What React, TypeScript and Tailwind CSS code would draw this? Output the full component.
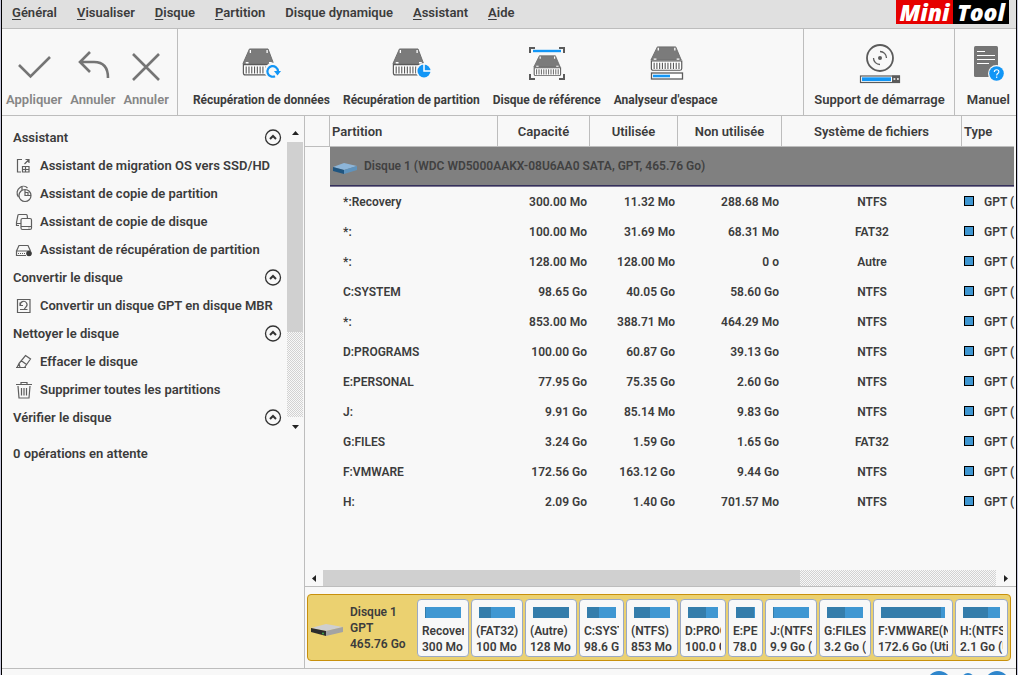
import type { ReactNode } from 'react'

const menus = [
  { key: 'G', rest: 'énéral' },
  { key: 'V', rest: 'isualiser' },
  { key: 'D', rest: 'isque' },
  { key: 'P', rest: 'artition' },
  { key: '', rest: 'Disque dynamique' },
  { key: 'A', rest: 'ssistant' },
  { key: 'A', rest: 'ide' },
]

const partitions = [
  { name: '*:Recovery', size: '300.00 Mo', used: '11.32 Mo', free: '288.68 Mo', fs: 'NTFS', type: 'GPT (Recovery)' },
  { name: '*:', size: '100.00 Mo', used: '31.69 Mo', free: '68.31 Mo', fs: 'FAT32', type: 'GPT (partition EFI)' },
  { name: '*:', size: '128.00 Mo', used: '128.00 Mo', free: '0 o', fs: 'Autre', type: 'GPT (partition)' },
  { name: 'C:SYSTEM', size: '98.65 Go', used: '40.05 Go', free: '58.60 Go', fs: 'NTFS', type: 'GPT (partition)' },
  { name: '*:', size: '853.00 Mo', used: '388.71 Mo', free: '464.29 Mo', fs: 'NTFS', type: 'GPT (Recovery)' },
  { name: 'D:PROGRAMS', size: '100.00 Go', used: '60.87 Go', free: '39.13 Go', fs: 'NTFS', type: 'GPT (partition)' },
  { name: 'E:PERSONAL', size: '77.95 Go', used: '75.35 Go', free: '2.60 Go', fs: 'NTFS', type: 'GPT (partition)' },
  { name: 'J:', size: '9.91 Go', used: '85.14 Mo', free: '9.83 Go', fs: 'NTFS', type: 'GPT (partition)' },
  { name: 'G:FILES', size: '3.24 Go', used: '1.59 Go', free: '1.65 Go', fs: 'FAT32', type: 'GPT (partition)' },
  { name: 'F:VMWARE', size: '172.56 Go', used: '163.12 Go', free: '9.44 Go', fs: 'NTFS', type: 'GPT (partition)' },
  { name: 'H:', size: '2.09 Go', used: '1.40 Go', free: '701.57 Mo', fs: 'NTFS', type: 'GPT (partition)' },
]

// grow = share of the disk map, used = filled part in percent
const blocks = [
  { label: 'Recovery', size: '300 Mo (Utilisé)', used: 3, grow: 52 },
  { label: '(FAT32)', size: '100 Mo (Utilisé)', used: 32, grow: 52 },
  { label: '(Autre)', size: '128 Mo', used: 100, grow: 52 },
  { label: 'C:SYSTEM', size: '98.6 Go (Utilisé)', used: 40, grow: 45 },
  { label: '(NTFS)', size: '853 Mo', used: 45, grow: 52 },
  { label: 'D:PROGRAMS', size: '100.0 Go', used: 61, grow: 46 },
  { label: 'E:PERSONAL', size: '78.0 Go', used: 97, grow: 35 },
  { label: 'J:(NTFS)', size: '9.9 Go (Utilisé)', used: 1, grow: 52 },
  { label: 'G:FILES', size: '3.2 Go (Utilisé)', used: 49, grow: 52 },
  { label: 'F:VMWARE(NTFS)', size: '172.6 Go (Utilisé)', used: 94, grow: 80 },
  { label: 'H:(NTFS)', size: '2.1 Go (Utilisé)', used: 67, grow: 53 },
]

function Drive() {
  return (
    <>
      <path d="M8 1h20l6 15H1z" fill="#7b7b7b" />
      <path d="M8 1h20l6 15H1z" fill="none" stroke="#6b6b6b" />
      <path d="M9 2v3M27 2v3M4 15h3M29 15h3" stroke="#fff" strokeWidth="1.4" />
      <path d="M1.5 17h33v8.5q0 2-2 2h-29q-2 0-2-2z" fill="#fff" stroke="#5b5b5b" strokeWidth="1.3" />
      <path d="M4.5 19v7M7.500 19v7M10.500 19v7M13.500 19v7M16.500 19v7M19.500 19v7M22.500 19v7M25.500 19v7M28.500 19v7M31.500 19v7" stroke="#5b5b5b" strokeWidth="1.2" />
    </>
  )
}

function DataRecoveryIcon() {
  return (
    <svg width="40" height="40" viewBox="0 0 40 40">
      <g transform="translate(1 4) scale(.93 .98)"><Drive /></g>
      <circle cx="32" cy="27" r="8.5" fill="#f8f8f8" />
      <path d="M34 32.200a5.300 5.300 0 1 1 3-5" fill="none" stroke="#1296f6" strokeWidth="2.200" />
      <path d="M33 27h7l-3.500 4.600z" fill="#1296f6" />
    </svg>
  )
}

function PartitionRecoveryIcon() {
  return (
    <svg width="40" height="40" viewBox="0 0 40 40">
      <g transform="translate(1 4) scale(.93 .98)"><Drive /></g>
      <circle cx="33" cy="27" r="8" fill="#f8f8f8" />
      <circle cx="33" cy="27" r="6.5" fill="#1296f6" />
      <path d="M33 20v7h7" fill="none" stroke="#fff" strokeWidth="1.5" />
    </svg>
  )
}

function BenchmarkIcon() {
  return (
    <svg width="40" height="40" viewBox="0 0 40 40">
      <path d="M3 9V4h5M32 4h5v5M37 30v5h-5M8 35H3v-5" fill="none" stroke="#5b5b5b" strokeWidth="2" />
      <path d="M6 7h28" stroke="#1296f6" strokeWidth="2.4" />
      <g transform="translate(6 11) scale(.8 .75)"><Drive /></g>
    </svg>
  )
}

function SpaceIcon() {
  return (
    <svg width="40" height="40" viewBox="0 0 40 40">
      <g transform="translate(4 2) scale(.92 .88)"><Drive /></g>
      <rect x="5.5" y="29" width="31" height="6" fill="#fff" stroke="#5b5b5b" strokeWidth="1.3" />
      <path d="M7 32h17" stroke="#1296f6" strokeWidth="2.6" />
    </svg>
  )
}

function BootIcon() {
  return (
    <svg width="42" height="40" viewBox="0 0 42 40">
      <circle cx="21" cy="14" r="13" fill="none" stroke="#5b5b5b" strokeWidth="1.8" />
      <circle cx="21" cy="14" r="2" fill="#5b5b5b" />
      <path d="M21 7.500a6.500 6.500 0 0 1 6.500 6.500M14.500 14a6.500 6.500 0 0 0 6.500 6.500" fill="none" stroke="#5b5b5b" strokeWidth="1.3" />
      <rect x="1.5" y="32" width="39" height="6.5" fill="#fff" stroke="#5b5b5b" strokeWidth="1.2" />
      <path d="M3 35.200h29" stroke="#1296f6" strokeWidth="3.8" />
      <path d="M33 31.500h8v7.500h-8z" fill="#5b5b5b" />
      <path d="M34.500 35h1.800M38 35h1.800" stroke="#fff" strokeWidth="1.6" />
    </svg>
  )
}

function ManualIcon() {
  return (
    <svg width="34" height="40" viewBox="0 0 34 40">
      <rect x="3" y="2" width="24" height="31" rx="1.5" fill="#757575" />
      <path d="M6 7.500h8M6 11.500h18M6 15.500h18M6 19.500h12" stroke="#fff" strokeWidth="1.2" />
      <circle cx="25.5" cy="29.500" r="8.5" fill="#f8f8f8" />
      <circle cx="25.5" cy="29.500" r="7.3" fill="#1296f6" />
      <path d="M23.300 28q0-2.300 2.300-2.300t2.300 2q0 1-1.200 1.800-1 .7-1 2M25.700 32.500v1.500" fill="none" stroke="#fff" strokeWidth="1.1" />
    </svg>
  )
}

type ToolProps = { label: string; icon: ReactNode; disabled?: boolean }

function Tool({ label, icon, disabled }: ToolProps) {
  return (
    <button disabled={disabled} className="flex flex-col items-center gap-1.5 pt-[15px] leading-5 whitespace-nowrap disabled:text-[#868686]">
      <span className="h-10">{icon}</span>
      <span>{label}</span>
    </button>
  )
}

function StrokeIcon({ d }: { d: string }) {
  return (
    <svg width="36" height="40" viewBox="0 0 36 40" fill="none" stroke="#757575" strokeWidth="2.6">
      <path d={d} />
    </svg>
  )
}

function SmallIcon({ children }: { children: ReactNode }) {
  return (
    <svg width="18" height="18" viewBox="0 0 18 18" fill="none" stroke="#5e5e5e" strokeWidth="1.2" className="shrink-0">
      {children}
    </svg>
  )
}

const groups = [
  {
    title: 'Assistant',
    items: [
      {
        label: 'Assistant de migration OS vers SSD/HD',
        icon: <SmallIcon><path d="M7 2.500H2.500v12.500H6M9.500 7l4.500-4.500M10.500 2.500H14V6M7.500 9.500h6.500v5.500H7.500zM7.500 12.500h6.500M10.500 9.500v5.500" /></SmallIcon>,
      },
      {
        label: 'Assistant de copie de partition',
        icon: <SmallIcon><circle cx="10" cy="10.500" r="6" /><path d="M10 5v5.500h6M10 7.500h3v3M3.500 12A6.500 6.500 0 0 1 5 2.500 5.500 5.500 0 0 1 12.500 3M7 1.500V5" /></SmallIcon>,
      },
      {
        label: 'Assistant de copie de disque',
        icon: <SmallIcon><rect x="6" y="5.500" width="10.500" height="11" rx="1.500" /><path d="M6 13.500h10.500M13.500 15h1M4 12.500H1.500V9.500L3 2q.2-.5 1-.5h7q1 0 1.200 1l.3 3M1.500 10.500H6" /></SmallIcon>,
      },
      {
        label: 'Assistant de récupération de partition',
        icon: <SmallIcon><path d="M1.500 10l2.500-5.500h9l2.500 5.500M11 14.500H1.500V10h14" /><path d="M3 12.500h7" strokeDasharray="1 1" /><circle cx="14" cy="12.500" r="2.800" fill="#3b3b3b" stroke="none" /></SmallIcon>,
      },
    ],
  },
  {
    title: 'Convertir le disque',
    items: [
      {
        label: 'Convertir un disque GPT en disque MBR',
        icon: <SmallIcon><path d="M2.500 2.500h12.500v13H2.500zM5 12.500h7.500M5.500 8.500a3.300 3.300 0 1 1 5.500 1.500l-2 2.500M5 5.500v3h3" /></SmallIcon>,
      },
    ],
  },
  {
    title: 'Nettoyer le disque',
    items: [
      {
        label: 'Effacer le disque',
        icon: <SmallIcon><path d="M10.500 2.500l5 3.500-6 8.500H5l-1-4zM6 7.500l5.500 4M1 14.500h10M4 10.500l-2 4" /></SmallIcon>,
      },
      {
        label: 'Supprimer toutes les partitions',
        icon: <SmallIcon><path d="M1 3.500h16M6 3V1.500h6V3M3 5l1 12h10l1-12M6.500 7v7.500M9 7v7.500M11.500 7v7.500" /></SmallIcon>,
      },
    ],
  },
  { title: 'Vérifier le disque', items: [] },
]

const checker = 'bg-[repeating-conic-gradient(#d2d2d2_0_25%,#f8f8f8_0_50%)] bg-[length:2px_2px]'

function Sidebar() {
  return (
    <aside className="w-[303px] shrink-0 border-r border-[#bdbdbd]">
      <div className="flex pt-2 pr-px">
        <div className="flex-1 pl-[11px]">
          {groups.map((group) => (
            <section key={group.title}>
              <button className="flex h-7 w-full items-center justify-between pr-[5px]">
                {group.title}
                <svg width="18" height="18" viewBox="0 0 18 18" fill="none" stroke="#333">
                  <circle cx="9" cy="8.5" r="7.5" strokeWidth="1.3" />
                  <path d="M6 10l3-3 3 3" strokeWidth="2" />
                </svg>
              </button>
              {group.items.map((item) => (
                <button key={item.label} className="flex h-7 w-full items-center gap-[7px] pl-0.5 whitespace-nowrap">
                  {item.icon}
                  <span>{item.label}</span>
                </button>
              ))}
            </section>
          ))}
        </div>
        <div className={`flex w-4 flex-col ${checker}`}>
          <div className="flex h-[18px] items-center justify-center bg-[#f8f8f8]">
            <svg width="7" height="4" viewBox="0 0 7 4"><path d="M0 4l3.500-4L7 4z" fill="#222" /></svg>
          </div>
          <div className="h-[190px] bg-[#d0d0d0]" />
          <div className="flex-1" />
          <div className="flex h-[15px] items-center justify-center bg-[#f8f8f8] pt-1">
            <svg width="7" height="4" viewBox="0 0 7 4"><path d="M0 0l3.500 4L7 0z" fill="#222" /></svg>
          </div>
        </div>
      </div>
      <div className="flex h-11 items-center pl-[11px]">0 opérations en attente</div>
    </aside>
  )
}

function PartitionTable() {
  const head = 'border-r border-b border-[#bdbdbd] p-0 pt-0.5 font-semibold'
  return (
    <div className="overflow-hidden pr-0.5">
      <table className="w-full table-fixed border-separate border-spacing-0">
        <colgroup>
          <col className="w-[25px]" />
          <col />
          <col className="w-[92px]" />
          <col className="w-[88px]" />
          <col className="w-[104px]" />
          <col className="w-[180px]" />
          <col className="w-[52px]" />
        </colgroup>
        <thead>
          <tr className="h-[31px]">
            <th className={head}><span className="sr-only">Disque</span></th>
            <th className={`${head} pl-0.5 text-left`}>Partition</th>
            <th className={head}>Capacité</th>
            <th className={head}>Utilisée</th>
            <th className={head}>Non utilisée</th>
            <th className={head}>Système de fichiers</th>
            <th className="border-b border-[#bdbdbd] p-0 pt-0.5 pl-0.5 text-left font-semibold">Type</th>
          </tr>
        </thead>
        <tbody className="text-xs">
          <tr className="h-10">
            <td />
            <td colSpan={6} className="border-b border-[#7a7590] bg-[#808080] p-0 text-[#414141]">
              <div className="flex h-[39px] items-center gap-1.5 border-b border-[#35305c] pl-0.5">
                <svg width="26" height="22" viewBox="0 0 26 22">
                  <path d="M1 12l11-4 13 3-13 4z" fill="#8db5d8" />
                  <path d="M1 12l11 3v4L1 16z" fill="#1f5580" />
                  <path d="M12 15l13-4v4l-13 4z" fill="#5f93bd" />
                </svg>
                Disque 1 (WDC WD5000AAKX-08U6AA0 SATA, GPT, 465.76 Go)
              </div>
            </td>
          </tr>
          {partitions.map((p, i) => (
            <tr key={i} className="h-[30px]">
              <td />
              <td className="p-0 pl-[13px]">{p.name}</td>
              <td className="p-0 pr-[3px] text-right">{p.size}</td>
              <td className="p-0 pr-[3px] text-right">{p.used}</td>
              <td className="p-0 pr-[3px] text-right">{p.free}</td>
              <td className="p-0 text-center">{p.fs}</td>
              <td className="overflow-hidden p-0 pl-0.5 whitespace-nowrap">
                <span className="mr-2.5 inline-block size-2.5 border border-black bg-[#3f97d2]" />
                {p.type}
              </td>
            </tr>
          ))}
        </tbody>
      </table>
    </div>
  )
}

function DiskMap() {
  return (
    <div className="my-[7px] mr-[5px] ml-0.5 flex h-[67px] items-center rounded border border-[#c8900c] bg-[#ebd170] pr-0.5 text-xs leading-4">
      <svg width="34" height="20" viewBox="0 0 34 20" className="ml-0.5 shrink-0">
        <path d="M1 10l15-4 17 3-17 4z" fill="#cfcfcf" />
        <path d="M1 10l15 3v5L1 14z" fill="#2c2c2c" />
        <path d="M16 13l17-4v5l-17 4z" fill="#a3a3a3" />
        <circle cx="13" cy="15.500" r="1" fill="#3fae4a" />
      </svg>
      <div className="w-[73px] shrink-0 pl-1.5 whitespace-nowrap">
        Disque 1<br />GPT<br />465.76 Go
      </div>
      <div className="flex min-w-0 flex-1 gap-0.5">
        {blocks.map((b) => (
          <div
            key={b.label}
            className="h-[58px] min-w-0 overflow-hidden rounded border border-[#9aa9c4] bg-[#f8f8f8] px-1 pt-[7px]"
            style={{ flex: `${b.grow} ${b.grow} ${b.grow}px` }}
          >
            <div className="mx-[3px] h-[11px] bg-[#3f97d2]">
              <div className="h-full bg-[#347dab]" style={{ width: `${b.used}%` }} />
            </div>
            <div className="mt-[5px] overflow-hidden whitespace-nowrap">
              {b.label}<br />{b.size}
            </div>
          </div>
        ))}
      </div>
    </div>
  )
}

export default function App() {
  return (
    <div className="flex h-screen flex-col overflow-hidden border-x border-[#c9c9dd] bg-[#f8f8f8] font-['Roboto',sans-serif] text-[13px] font-semibold text-[#3c3c3c]">
      <div className="flex min-h-0 flex-1 flex-col border-x border-black">
        <header className="flex h-[29px] shrink-0 items-start justify-between border-b border-[#bdbdbd] bg-[#e0e0e0] pr-[7px] pl-2.5">
          <nav className="flex h-[26px] items-center gap-5">
            {menus.map((m, i) => (
              <button key={i}>
                <span className="underline underline-offset-2">{m.key}</span>{m.rest}
              </button>
            ))}
          </nav>
          <div className="flex font-['Open_Sans',sans-serif] text-[23px] leading-6 font-extrabold text-white italic">
            <span className="w-[57px] bg-[#e60000] text-center">Mini</span>
            <span className="w-14 bg-black text-center">Tool</span>
          </div>
        </header>

        <div className="flex h-[87px] shrink-0 border-b border-[#bdbdbd]">
          <div className="flex items-start gap-2 border-r border-[#bdbdbd] pr-2 pl-1">
            <Tool label="Appliquer" disabled icon={<StrokeIcon d="M3 21l11.500 11.500L34 13" />} />
            <Tool label="Annuler" disabled icon={<StrokeIcon d="M15 8L5 18l10 10M5 18h14q14 0 14 16" />} />
            <Tool label="Annuler" disabled icon={<StrokeIcon d="M5 10l26 26M31 10L5 36" />} />
          </div>
          <div className="flex flex-1 items-start gap-[13px] pl-[15px] text-xs font-bold">
            <Tool label="Récupération de données" icon={<DataRecoveryIcon />} />
            <Tool label="Récupération de partition" icon={<PartitionRecoveryIcon />} />
            <Tool label="Disque de référence" icon={<BenchmarkIcon />} />
            <Tool label="Analyseur d'espace" icon={<SpaceIcon />} />
          </div>
          <div className="flex items-start border-x border-[#bdbdbd] pr-[9px] pl-2.5">
            <Tool label="Support de démarrage" icon={<BootIcon />} />
          </div>
          <div className="flex items-start pr-1.5 pl-3">
            <Tool label="Manuel" icon={<ManualIcon />} />
          </div>
        </div>

        <div className="flex min-h-0 flex-1">
          <Sidebar />
          <main className="flex min-w-0 flex-1 flex-col">
            <PartitionTable />
            <div className="mt-auto flex h-[17px] shrink-0 border-b border-[#bdbdbd]">
              <div className="flex w-[18px] items-center justify-center">
                <svg width="4" height="7" viewBox="0 0 4 7"><path d="M4 0L0 3.500 4 7z" fill="#222" /></svg>
              </div>
              <div className="w-[477px] bg-[#d0d0d0]" />
              <div className={`flex-1 ${checker}`} />
              <div className="flex w-5 items-center justify-center">
                <svg width="4" height="7" viewBox="0 0 4 7"><path d="M0 0l4 3.500L0 7z" fill="#222" /></svg>
              </div>
            </div>
            <DiskMap />
          </main>
        </div>

        <footer className="flex h-[7px] shrink-0 items-start justify-end gap-[11px] overflow-hidden border-t border-[#bdbdbd] pt-0.5 pr-[7px]">
          <span className="size-6 shrink-0 rounded-full bg-[#2f86cc]" />
          <span className="mt-0.5 h-3 w-3 shrink-0 rounded-full bg-[#2f86cc]" />
          <span className="size-6 shrink-0 rounded-full bg-[#2f86cc]" />
        </footer>
      </div>
    </div>
  )
}
